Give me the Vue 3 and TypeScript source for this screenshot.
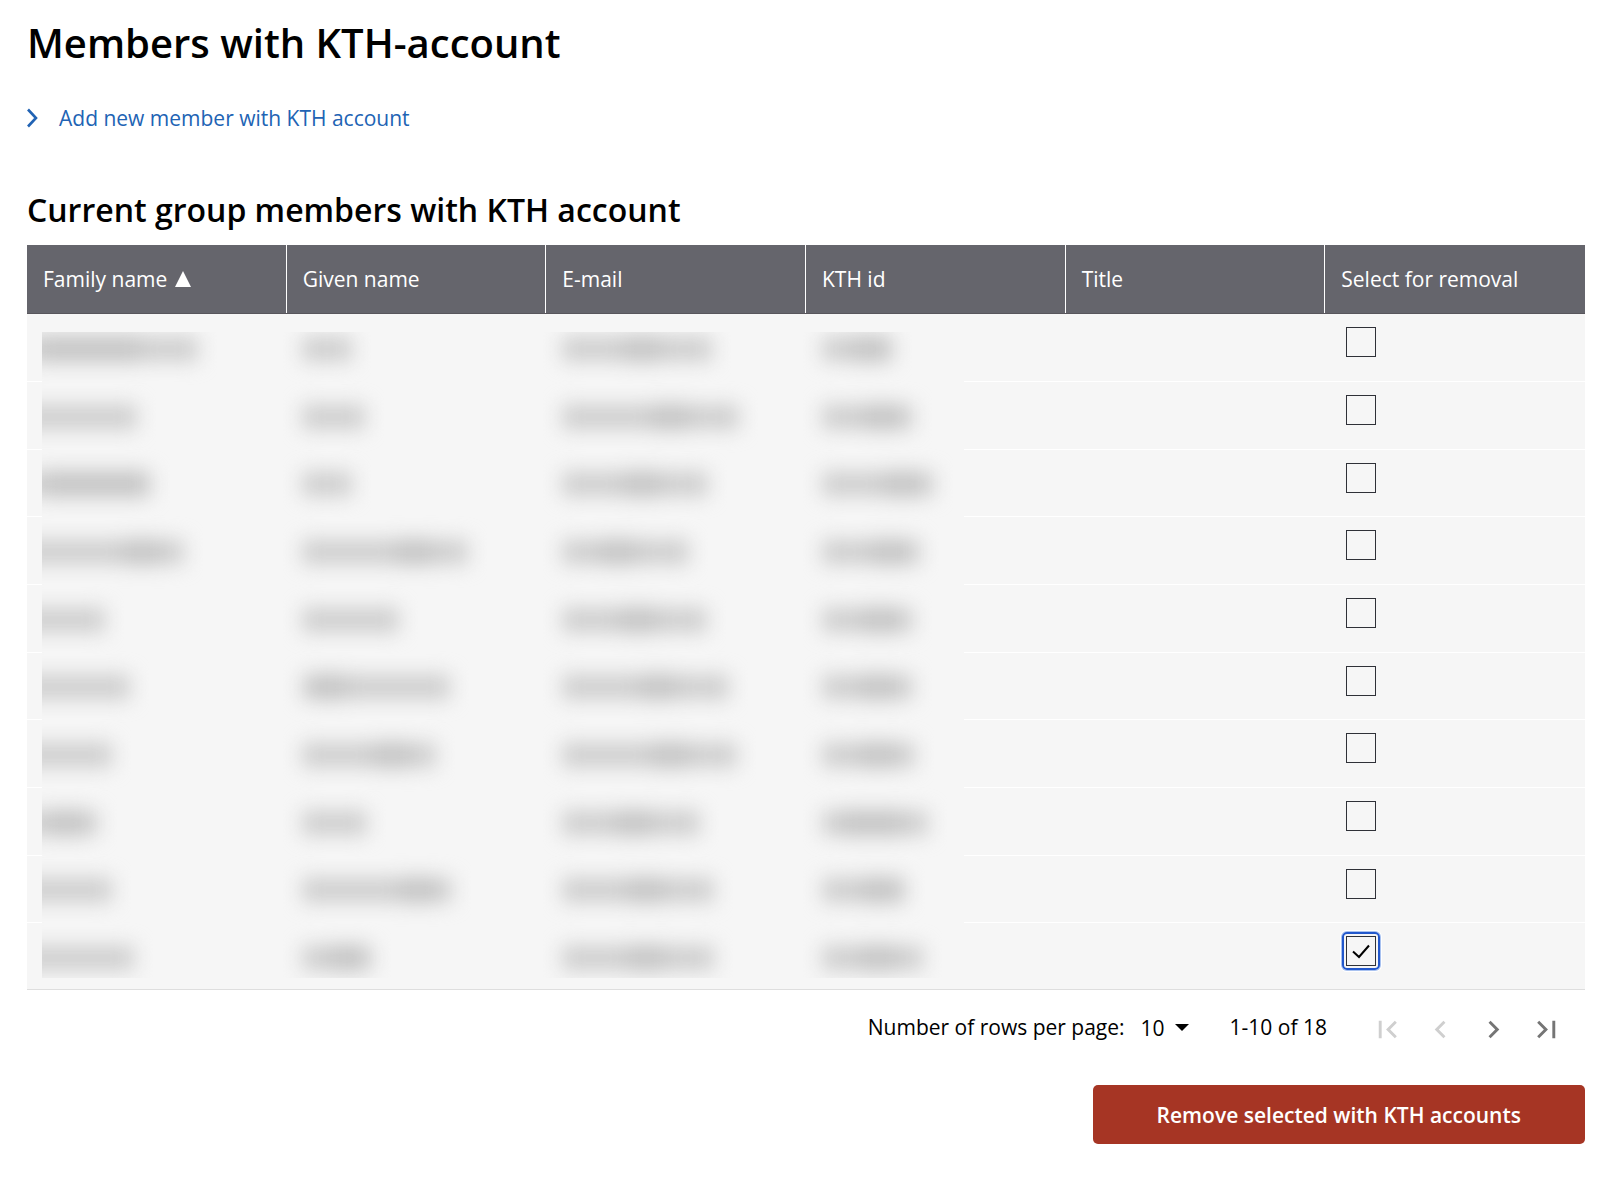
<script setup lang="ts">
import { ref } from 'vue'

interface Column {
  key: string
  label: string
}

/** A redacted value: its width, and where the denser part of it sits. */
interface Mask {
  width: number
  spot?: number
  size?: number
}

interface Member {
  id: number
  masks: Mask[]
}

const columns: Column[] = [
  { key: 'family', label: 'Family name' },
  { key: 'given', label: 'Given name' },
  { key: 'email', label: 'E-mail' },
  { key: 'kthid', label: 'KTH id' },
  { key: 'title', label: 'Title' },
  { key: 'remove', label: 'Select for removal' },
]

const members: Member[] = [
  { id: 1, masks: [{ width: 178, spot: 70, size: 100 }, { width: 50 }, { width: 150, spot: 80 }, { width: 71, spot: 48 }] },
  { id: 2, masks: [{ width: 117 }, { width: 63 }, { width: 177, spot: 108 }, { width: 91, spot: 60 }] },
  { id: 3, masks: [{ width: 131, spot: 75, size: 100 }, { width: 50 }, { width: 146, spot: 80 }, { width: 112, spot: 80 }] },
  { id: 4, masks: [{ width: 164, spot: 122 }, { width: 166, spot: 112 }, { width: 127, spot: 56 }, { width: 98, spot: 68 }] },
  { id: 5, masks: [{ width: 85 }, { width: 97 }, { width: 145, spot: 76 }, { width: 91, spot: 58 }] },
  { id: 6, masks: [{ width: 110 }, { width: 148, spot: 26 }, { width: 167, spot: 96 }, { width: 91, spot: 56 }] },
  { id: 7, masks: [{ width: 92 }, { width: 134, spot: 90 }, { width: 175, spot: 108 }, { width: 93, spot: 56 }] },
  { id: 8, masks: [{ width: 78, spot: 46 }, { width: 65 }, { width: 138, spot: 72 }, { width: 106, spot: 50, size: 60 }] },
  { id: 9, masks: [{ width: 92 }, { width: 150, spot: 116 }, { width: 152, spot: 84 }, { width: 84, spot: 58 }] },
  { id: 10, masks: [{ width: 114 }, { width: 70, spot: 45 }, { width: 152, spot: 84 }, { width: 101, spot: 56 }] },
]

const selected = ref<number[]>([10])
const rowsPerPage = ref(10)
</script>

<template>
  <main class="page">
    <h1>Members with KTH-account</h1>
    <a class="add-link" href="#add">
      <svg class="add-icon" viewBox="0 0 12 20" aria-hidden="true">
        <path d="M1 1.5 9 10 1 18.5" fill="none" stroke="currentColor" stroke-width="2.6" />
      </svg>
      Add new member with KTH account
    </a>

    <h2>Current group members with KTH account</h2>
    <div class="table-wrap">
      <table>
        <thead>
          <tr>
            <th v-for="(column, i) in columns" :key="column.key" scope="col">
              {{ column.label }}<svg v-if="i === 0" class="sort" viewBox="0 0 16 16" aria-hidden="true"><path d="M8 0 16 16H0z" fill="currentColor" /></svg>
            </th>
          </tr>
        </thead>
        <tbody>
          <tr v-for="member in members" :key="member.id">
            <td v-for="n in 5" :key="n"></td>
            <td>
              <label class="check" :class="{ focused: member.id === 10 }">
                <input v-model="selected" type="checkbox" :value="member.id" aria-label="Select for removal" />
                <svg viewBox="0 0 30 30" aria-hidden="true">
                  <path d="M7 15.5 13 21 23 9.5" fill="none" stroke="currentColor" stroke-width="2" />
                </svg>
              </label>
            </td>
          </tr>
        </tbody>
      </table>
      <div class="redaction" aria-hidden="true">
        <div class="redaction-grid">
          <template v-for="member in members" :key="member.id">
            <div v-for="(mask, i) in member.masks" :key="i" class="mask">
              <span class="bar" :style="{ width: mask.width + 'px' }"></span>
              <span v-if="mask.spot" class="spot" :style="{ left: mask.spot + 'px', width: (mask.size ?? 36) + 'px' }"></span>
            </div>
          </template>
        </div>
      </div>
    </div>

    <div class="pagination">
      <label for="rows">Number of rows per page:</label>
      <div class="rows-select">
        <select id="rows" v-model="rowsPerPage">
          <option :value="10">10</option>
          <option :value="25">25</option>
        </select>
        <svg viewBox="0 0 14 7" aria-hidden="true"><path d="M0 0h14L7 7z" fill="currentColor" /></svg>
      </div>
      <span class="range">1-10 of 18</span>
      <div class="pager">
        <button type="button" disabled aria-label="First page">
          <svg viewBox="0 0 24 24"><path d="M18.41 16.59 13.82 12l4.59-4.59L17 6l-6 6 6 6zM6 6h2v12H6z" /></svg>
        </button>
        <button type="button" disabled aria-label="Previous page">
          <svg viewBox="0 0 24 24"><path d="M15.41 7.41 14 6l-6 6 6 6 1.41-1.41L10.83 12z" /></svg>
        </button>
        <button type="button" aria-label="Next page">
          <svg viewBox="0 0 24 24"><path d="M10 6 8.59 7.41 13.17 12l-4.58 4.59L10 18l6-6z" /></svg>
        </button>
        <button type="button" aria-label="Last page">
          <svg viewBox="0 0 24 24"><path d="M5.59 7.41 10.18 12l-4.59 4.59L7 18l6-6-6-6zM16 6h2v12h-2z" /></svg>
        </button>
      </div>
    </div>

    <div class="actions">
      <button type="button" class="remove">Remove selected with KTH accounts</button>
    </div>
  </main>
</template>

<style>
body {
  background: #fff;
}
</style>

<style scoped>
.page {
  box-sizing: border-box;
  padding: 19px 19px 32px 27px;
  font-family: "Open Sans", "Noto Sans", sans-serif;
  font-size: 21px;
  line-height: 32px;
  color: #000;
}

h1 {
  margin: 0 0 35px;
  font-size: 40px;
  line-height: 48px;
  font-weight: 600;
}

h2 {
  margin: 56px 0 15px;
  font-size: 32px;
  line-height: 40px;
  font-weight: 600;
}

.add-link {
  display: flex;
  align-items: center;
  gap: 20px;
  color: #2163b4;
  text-decoration: none;
}

.add-icon {
  width: 12px;
  height: 20px;
}

.table-wrap {
  position: relative;
}

table {
  width: 100%;
  table-layout: fixed;
  border-spacing: 0;
}

th {
  box-sizing: border-box;
  height: 69px;
  padding: 0 16px;
  background: linear-gradient(#fff, #fff) right top / 1px 68px no-repeat #65656c;
  border-bottom: 1px solid #58565c;
  color: #fff;
  font-weight: 400;
  text-align: left;
}

th:last-child {
  background: #65656c;
}

.sort {
  width: 16px;
  height: 16px;
  margin-left: 8px;
  vertical-align: 0;
}

td {
  box-sizing: border-box;
  height: 68px;
  padding: 13px 21px 0;
  background: #f6f6f6;
  border-bottom: 1px solid #fff;
  vertical-align: top;
}

tr:nth-child(3n) td {
  height: 67px;
}

tbody tr:last-child td {
  height: 67px;
  border-bottom-color: #dedede;
}

.check {
  position: relative;
  display: block;
  width: 30px;
  height: 30px;
}

.check input {
  display: block;
  box-sizing: border-box;
  width: 30px;
  height: 30px;
  margin: 0;
  appearance: none;
  border: 1px solid #2f3138;
}

.check svg {
  position: absolute;
  inset: 0;
  visibility: hidden;
}

.check input:checked + svg {
  visibility: visible;
}

.focused::before {
  content: "";
  position: absolute;
  inset: -4px;
  border: 2px solid #2258cc;
  border-radius: 5px;
  box-shadow: 0 0 0 1px #a9c2f0, 0 0 0 2px #fff;
}

.redaction {
  position: absolute;
  top: 87px;
  bottom: 12px;
  left: 15px;
  width: 59.2%;
  overflow: hidden;
  background: #f6f6f6;
}

.redaction-grid {
  display: grid;
  grid-template-columns: 28.2% 28.2% 28.2% 1fr;
  grid-template-rows: repeat(10, 1fr);
  height: 677px;
  margin-top: -17px;
}

.mask {
  position: relative;
  display: flex;
  align-items: center;
  filter: blur(10px);
}

.mask:nth-child(4n + 1) {
  margin-left: -22px;
  margin-right: 22px;
}

.bar {
  height: 24px;
  background: #cdcdcd;
}

.spot {
  position: absolute;
  height: 26px;
  background: #c3c3c3;
  transform: translateX(-50%);
}

.pagination {
  display: flex;
  justify-content: flex-end;
  align-items: center;
  height: 74px;
}

.rows-select {
  position: relative;
  margin: 2px 0 0 16px;
}

.rows-select select {
  display: block;
  width: 52px;
  height: 32px;
  padding: 0;
  appearance: none;
  border: 0;
  background: none;
  font: inherit;
  color: inherit;
}

.rows-select svg {
  position: absolute;
  top: 12px;
  right: 4px;
  width: 14px;
  height: 7px;
}

.range {
  margin-left: 37px;
}

.pager {
  display: flex;
  margin: 4px 12px 0 34px;
}

.pager button {
  display: grid;
  place-items: center;
  width: 53px;
  height: 53px;
  padding: 0;
  border: 0;
  background: none;
  color: #757575;
}

.pager button:disabled {
  color: #cfcfcf;
}

.pager svg {
  width: 35px;
  height: 35px;
  fill: currentColor;
}

.actions {
  display: flex;
  justify-content: flex-end;
  margin-top: 21px;
}

.remove {
  height: 59px;
  padding: 0 64px;
  border: 0;
  border-radius: 5px;
  background: #a63524;
  color: #fff;
  font: inherit;
  font-weight: 600;
}
</style>
